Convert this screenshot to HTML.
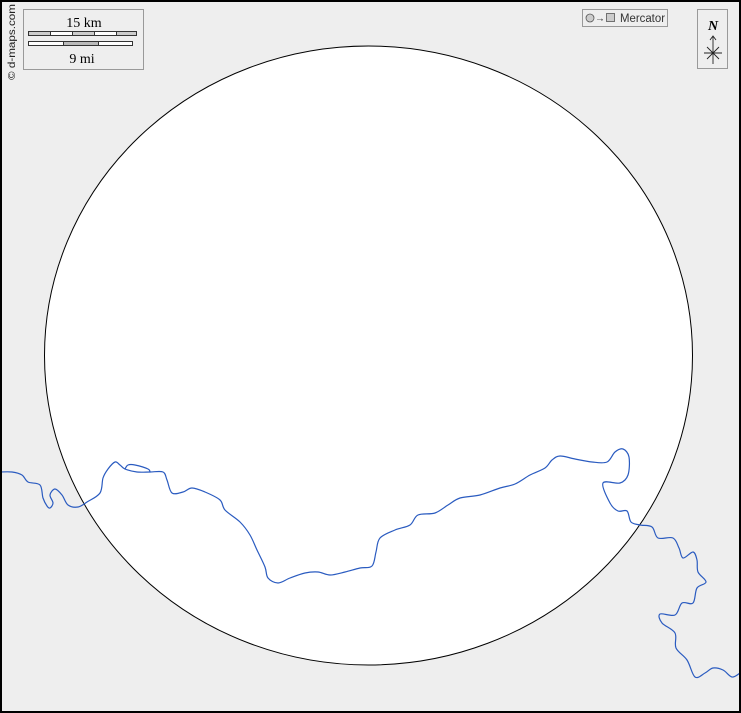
<!DOCTYPE html>
<html><head><style>
html,body{margin:0;padding:0;background:#eee;}
svg{display:block;}
</style></head><body>
<svg width="741" height="713" viewBox="0 0 741 713" xmlns="http://www.w3.org/2000/svg">
<rect x="0" y="0" width="741" height="713" fill="#eeeeee"/>
<ellipse cx="368.5" cy="355.5" rx="324" ry="309.5" fill="#fff" stroke="#000" stroke-width="1"/>
<g id="riv" fill="none" stroke="#2a5bc0" stroke-width="1.2" stroke-linejoin="round" stroke-linecap="round">
<polyline class="r" points="0,472 12,472 22,475 28,482 40,485 43,498 47,506 50,508 53,503 50,495 55,489 62,495 68,505 78,507 87,502 100,493 103,478 108,469 115,462 120,465 125,469 137,472 150,472 163,472 167,480 172,493 183,492 192,488 205,492 220,500 225,510 240,522 250,535 257,550 265,567 268,578 278,583 290,578 305,573 318,572 330,575 345,572 360,568 372,566 376,552 380,538 395,530 410,525 418,515 435,513 448,505 460,498 480,495 500,488 515,484 530,475 545,468 552,460 560,456 575,459 592,462 607,462 615,452 623,449 629,457 628,475 620,483 603,483 610,503 618,511 627,511 631,522 640,525 652,527 658,538 673,538 679,548 683,558 693,552 697,560 698,572 706,582 697,588 693,603 682,603 675,615 660,614 662,623 675,633 676,648 687,660 695,677 705,673 713,668 723,670 732,677 740,673"/>
<polyline class="r" points="125,469 128,465 135,465 148,469 150,472"/>
</g>
<rect x="1" y="1" width="739" height="711" fill="none" stroke="#000" stroke-width="2"/>
<rect x="23.5" y="9.5" width="120" height="60" fill="#eee" stroke="#999" stroke-width="1"/>
<text x="84" y="27" font-family="Liberation Serif, serif" font-size="14" text-anchor="middle">15 km</text>
<rect x="28.5" y="31.5" width="108" height="4" fill="#ccc" stroke="#333" stroke-width="1"/>
<rect x="50.5" y="31.5" width="22" height="4" fill="#fff" stroke="#333" stroke-width="1"/>
<rect x="94.5" y="31.5" width="22" height="4" fill="#fff" stroke="#333" stroke-width="1"/>
<rect x="28.5" y="41.5" width="104" height="4" fill="#fff" stroke="#333" stroke-width="1"/>
<rect x="63.5" y="41.5" width="35" height="4" fill="#bbb" stroke="#333" stroke-width="1"/>
<text x="82" y="63" font-family="Liberation Serif, serif" font-size="14" text-anchor="middle">9 mi</text>
<text transform="translate(15,80) rotate(-90)" font-family="Liberation Sans, sans-serif" font-size="10.5" fill="#222" textLength="76" lengthAdjust="spacingAndGlyphs">© d-maps.com</text>
<rect x="582.5" y="9.5" width="85" height="17" fill="#eee" stroke="#999"/>
<circle cx="590" cy="18" r="4" fill="#ccc" stroke="#555" stroke-width="0.8"/>
<text x="595" y="21.5" font-family="Liberation Sans, sans-serif" font-size="10" fill="#333">→</text>
<rect x="606.5" y="13.5" width="8" height="8" fill="#ccc" stroke="#555" stroke-width="0.8"/>
<text x="620" y="22" font-family="Liberation Sans, sans-serif" font-size="11.5" fill="#333" textLength="45" lengthAdjust="spacingAndGlyphs">Mercator</text>
<rect x="697.5" y="9.5" width="30" height="59" fill="#eee" stroke="#999"/>
<text x="713" y="30" font-family="Liberation Serif, serif" font-size="14" font-style="italic" font-weight="bold" text-anchor="middle">N</text>
<g stroke="#222" stroke-width="0.9" fill="none">
<line x1="713" y1="36" x2="713" y2="64"/>
<polyline points="710,40 713,36 716,40"/>
<line x1="704" y1="53" x2="722" y2="53"/>
<line x1="707" y1="47" x2="719" y2="59"/>
<line x1="719" y1="47" x2="707" y2="59"/>
</g>
</svg>
<script>
document.querySelectorAll('polyline.r').forEach(function(pl){
  var p=pl.getAttribute('points').trim().split(/\s+/).map(function(s){return s.split(',').map(Number);});
  var d='M'+p[0][0]+','+p[0][1];
  for(var i=0;i<p.length-1;i++){
    var p0=p[i-1]||p[i],p1=p[i],p2=p[i+1],p3=p[i+2]||p2;
    var c1=[p1[0]+(p2[0]-p0[0])/6,p1[1]+(p2[1]-p0[1])/6];
    var c2=[p2[0]-(p3[0]-p1[0])/6,p2[1]-(p3[1]-p1[1])/6];
    d+=' C'+c1[0].toFixed(1)+','+c1[1].toFixed(1)+' '+c2[0].toFixed(1)+','+c2[1].toFixed(1)+' '+p2[0]+','+p2[1];
  }
  var path=document.createElementNS('http://www.w3.org/2000/svg','path');
  path.setAttribute('d',d);
  pl.parentNode.replaceChild(path,pl);
});
</script>
</body></html>
